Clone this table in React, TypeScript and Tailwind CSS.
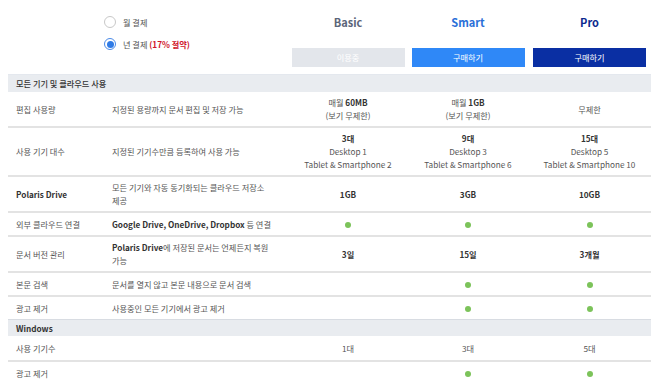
import React from 'react';

const cols = 'grid grid-cols-[96px_184px_120px_120px_123px]';

function Dot() {
  return <span className="inline-block w-[6px] h-[6px] rounded-full bg-[#7cc35a]" />;
}

type Row = {
  label: React.ReactNode;
  desc?: React.ReactNode;
  vals: React.ReactNode[];
};

const yes = <Dot />;

const section1: Row[] = [
  {
    label: '편집 사용량',
    desc: '지정된 용량까지 문서 편집 및 저장 가능',
    vals: [
      <><span>매월 <b className="text-[#333]">60MB</b></span><br />(보기 무제한)</>,
      <><span>매월 <b className="text-[#333]">1GB</b></span><br />(보기 무제한)</>,
      '무제한',
    ],
  },
  {
    label: '사용 기기 대수',
    desc: '지정된 기기수만큼 등록하여 사용 가능',
    vals: [
      <><b className="text-[#333]">3대</b><br />Desktop 1<br />Tablet &amp; Smartphone 2</>,
      <><b className="text-[#333]">9대</b><br />Desktop 3<br />Tablet &amp; Smartphone 6</>,
      <><b className="text-[#333]">15대</b><br />Desktop 5<br />Tablet &amp; Smartphone 10</>,
    ],
  },
  {
    label: <b className="text-[#333]">Polaris Drive</b>,
    desc: <>모든 기기와 자동 동기화되는 클라우드 저장소<br />제공</>,
    vals: [
      <b className="text-[#333]">1GB</b>,
      <b className="text-[#333]">3GB</b>,
      <b className="text-[#333]">10GB</b>,
    ],
  },
  {
    label: '외부 클라우드 연결',
    desc: <><b className="text-[#333]">Google Drive, OneDrive, Dropbox</b> 등 연결</>,
    vals: [yes, yes, yes],
  },
  {
    label: '문서 버전 관리',
    desc: <><b className="text-[#333]">Polaris Drive</b>에 저장된 문서는 언제든지 복원<br />가능</>,
    vals: [
      <b className="text-[#333]">3일</b>,
      <b className="text-[#333]">15일</b>,
      <b className="text-[#333]">3개월</b>,
    ],
  },
  {
    label: '본문 검색',
    desc: '문서를 열지 않고 본문 내용으로 문서 검색',
    vals: ['', yes, yes],
  },
  {
    label: '광고 제거',
    desc: '사용중인 모든 기기에서 광고 제거',
    vals: ['', yes, yes],
  },
];

const section2: Row[] = [
  { label: '사용 기기수', vals: ['1대', '3대', '5대'] },
  { label: '광고 제거', vals: ['', yes, yes] },
];

function TableRow({ row, first }: { row: Row; first?: boolean }) {
  return (
    <div
      className={`${cols} items-center min-h-[24px] py-[4px] ${first ? '' : 'border-t-2 border-[#e3e3e3]'}`}
    >
      <div className="pl-[8px]">{row.label}</div>
      <div className="pl-[8px] pr-[4px] whitespace-nowrap">{row.desc}</div>
      {row.vals.map((v, i) => (
        <div key={i} className="flex flex-col items-center text-center">
          <div>{v}</div>
        </div>
      ))}
    </div>
  );
}

function Radio({ checked, children }: { checked?: boolean; children: React.ReactNode }) {
  return (
    <div className="flex items-center gap-[7px] h-[12px]">
      {checked ? (
        <span className="w-[12px] h-[12px] rounded-full border border-[#4a8ae8] flex items-center justify-center bg-white">
          <span className="w-[7px] h-[7px] rounded-full bg-[#2f7be6]" />
        </span>
      ) : (
        <span className="w-[12px] h-[12px] rounded-full border border-[#c8c8c8] bg-white" />
      )}
      <span>{children}</span>
    </div>
  );
}

export default function App() {
  return (
    <div
      className="w-[658px] h-[385px] overflow-hidden bg-white text-[8.2px] leading-[13px] text-[#555]"
      style={{ fontFamily: '"Noto Sans CJK KR", "Noto Sans", sans-serif' }}
    >
      <div className="pl-[8px]">
        {/* Plan header */}
        <div className={`${cols} h-[74px]`}>
          <div />
          <div className="flex flex-col gap-[10px] pt-[16px]">
            <Radio>월 결제</Radio>
            <Radio checked>
              년 결제 <b className="text-[#d0142a]">(17% 절약)</b>
            </Radio>
          </div>
          <div className="flex flex-col items-center pt-[15px]">
            <div className="text-[11px] leading-[15px] font-bold text-[#5b6579]">Basic</div>
            <div className="mt-[18px] w-[113px] h-[19px] bg-[#e3e6eb] text-white text-center leading-[19px]">이용중</div>
          </div>
          <div className="flex flex-col items-center pt-[15px]">
            <div className="text-[11px] leading-[15px] font-bold text-[#2a6fd8]">Smart</div>
            <div className="mt-[18px] w-[113px] h-[19px] bg-[#2f88f7] text-white text-center leading-[19px]">구매하기</div>
          </div>
          <div className="flex flex-col items-center pt-[15px]">
            <div className="text-[11px] leading-[15px] font-bold text-[#0c2a8e]">Pro</div>
            <div className="mt-[18px] w-[113px] h-[19px] bg-[#0a2fa3] text-white text-center leading-[19px]">구매하기</div>
          </div>
        </div>

        {/* Table */}
        <div className="w-[643px] border-t border-[#e4e8ee]">
          <div className="h-[17px] bg-[#e9ecf0] pl-[8px] leading-[17px] text-[#333] font-medium">
            모든 기기 및 클라우드 사용
          </div>
          {section1.map((r, i) => (
            <TableRow key={i} row={r} first={i === 0} />
          ))}
          <div className="h-[17px] bg-[#e9ecf0] border-t border-[#d8dce2] pl-[8px] leading-[16px] text-[#333] font-bold">
            Windows
          </div>
          {section2.map((r, i) => (
            <TableRow key={i} row={r} first={i === 0} />
          ))}
        </div>
      </div>
    </div>
  );
}
